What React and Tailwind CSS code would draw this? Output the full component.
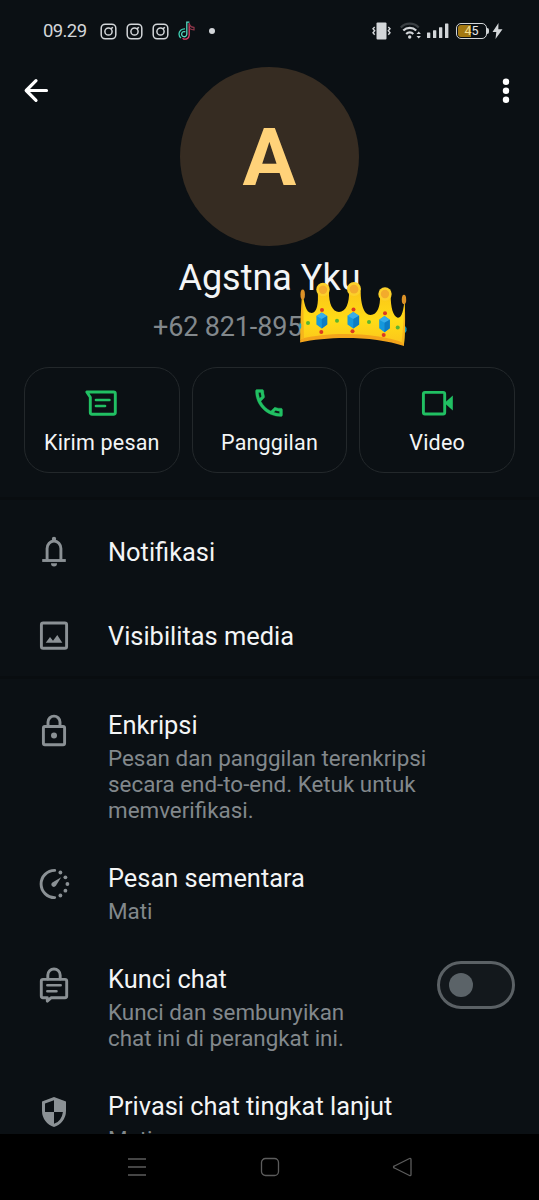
import React, { useState } from "react";

const InstagramIcon = () => (
  <svg width="17" height="17" viewBox="0 0 17 17" fill="none" stroke="#d3d6d9" strokeWidth="1.5">
    <rect x="1.2" y="1.2" width="14.6" height="14.6" rx="4" />
    <circle cx="8.5" cy="8.5" r="3.6" />
    <path d="M11 5.900 12.800 4.200" />
  </svg>
);

const TiktokIcon = () => (
  <svg width="17" height="20" viewBox="0 0 17 20" fill="none" strokeWidth="1.3">
    <path d="M10.2 1v12a4 4 0 0 1-6.6 3" stroke="#e0436a" transform="translate(1 1.2)" />
    <path d="M11.5 3.5c.6 1.800 2 2.800 4.500 3v2.300c-1.500 0-3-.4-4.300-1.300" stroke="#8c3548" />
    <path d="M7 7.800C3.600 7.600 1 9.900 1 13c0 1.700.8 3.200 2 4.100" stroke="#3fd0b4" />
    <path d="M7.300 10.800a2.600 2.600 0 1 0 1.500 2.500V1.200h2.600" stroke="#54d8bf" />
  </svg>
);

const StatusRight = () => (
  <div className="flex items-center">
    <svg width="19" height="18" viewBox="0 0 19 18" fill="#d3d6d9">
      <rect x="4.500" y="0.500" width="10" height="17" rx="1" />
      <path
        d="M2.700 5 1 6.800l1.700 2L1 10.800l1.700 2M16.300 5 18 6.800l-1.700 2 1.700 2-1.700 2"
        fill="none"
        stroke="#d3d6d9"
        strokeWidth="1.400"
      />
    </svg>
    <svg className="ml-[9px]" width="22" height="18" viewBox="0 0 22 18" fill="none" strokeWidth="2.200">
      <path d="M.8 5.400a12.500 12.500 0 0 1 17.900 0" stroke="#3a3f43" />
      <path d="M3.300 8.600a9 9 0 0 1 12.900 0" stroke="#d3d6d9" />
      <path d="M6.200 11.900a5 5 0 0 1 7.100 0" stroke="#d3d6d9" />
      <circle cx="9.700" cy="15" r="1.700" fill="#d3d6d9" />
      <path d="m16.500 12 2.200-2.600 2.200 2.600zM16.500 14l2.200 2.600 2.200-2.600z" fill="#d3d6d9" />
    </svg>
    <svg className="ml-[5px]" width="22" height="16" viewBox="0 0 22 16" fill="#d3d6d9">
      <rect x="0" y="9.500" width="3.300" height="5.500" rx="0.500" />
      <rect x="6" y="7.300" width="3.300" height="7.700" rx="0.500" />
      <rect x="12" y="4.300" width="3.300" height="10.700" rx="0.500" />
      <rect x="18" y="0.500" width="3.400" height="14.500" rx="0.500" />
    </svg>
    <div className="ml-[7px] flex h-4 w-[31px] items-center rounded-[5px] border-[1.500px] border-[#d3d6d9] p-px">
      <div className="flex h-full w-full items-center justify-center rounded-[3px] bg-linear-to-r from-[#a37812] from-47% to-transparent to-47% text-[12.5px] leading-none text-[#e8e8e8]">
        <span className="text-[#f5df8e]">4</span>5
      </div>
    </div>
    <div className="h-[6px] w-[2px] rounded-r bg-[#d3d6d9]" />
    <svg className="ml-[3px]" width="11" height="16" viewBox="0 0 11 16" fill="#d3d6d9">
      <path d="M6.500 0 .500 9h3.800L3.500 16 10.500 6.300H6.300z" />
    </svg>
  </div>
);

const Crown = () => (
  <svg width="108" height="66" viewBox="0 0 108 66">
    <defs>
      <linearGradient id="gold" x1="0" y1="0" x2="0" y2="1">
        <stop offset="0" stopColor="#fbc618" />
        <stop offset="0.550" stopColor="#ffdc16" />
        <stop offset="1" stopColor="#fbc51c" />
      </linearGradient>
    </defs>
    <path
      d="M3.500 10C5 20 6.500 31 12.700 31c5.300 0 7-10 6-21h11.300c-.3 11 3.500 20 10 20 7 0 10.500-9.500 10-20.500h11.700c0 12 3 23.500 9.800 23.500 7 0 10-9 9.500-19.500h10.700c0 12 2.300 20.500 7 22.200C103 36.500 104.500 27 105.500 19c1 8 .8 34-.5 43.500C78 52 31 51 1.300 58z"
      fill="url(#gold)"
    />
    <path d="M1.300 57C31 49.500 78 50.500 105 61v3C78 54.500 31 53.500 1 60.500z" fill="#f3a41b" />
    <path d="M3 12c-1 15-2 30-1.500 45l3.500-.8C4.500 40 5 27 3 12zM105.500 20c1 14 .5 29-.5 42l-2.500-.8c1.500-14 2.500-27 3-41.200z" fill="#f5b51c" />
    <ellipse cx="3.700" cy="12.500" rx="2.200" ry="5" fill="#dc9127" />
    <ellipse cx="105" cy="17.500" rx="2.200" ry="4.800" fill="#dc9127" />
    <circle cx="24" cy="7.500" r="6.700" fill="#fcd02a" />
    <circle cx="24" cy="7.800" r="4.200" fill="#f3ab2c" />
    <circle cx="55" cy="7" r="7" fill="#fcd02a" />
    <circle cx="55" cy="7.200" r="4.400" fill="#f3ab2c" />
    <circle cx="86" cy="12" r="6.700" fill="#fcd02a" />
    <circle cx="86" cy="12" r="4.200" fill="#f3ab2c" />
    <g>
      <path d="m22.800 30.500 5.400 3.500v8.500l-5.400 4-5.400-4V34z" fill="#1598dc" />
      <path d="m22.800 30.500 5.400 3.500-5.400 3-5.400-3z" fill="#38ade9" />
      <path d="m22.800 37 5.400-3v8.500l-5.400 4z" fill="#0c7cc4" />
      <path d="m54.300 30 5.800 3.700v8.800l-5.800 4-5.800-4v-8.800z" fill="#1598dc" />
      <path d="m54.300 30 5.800 3.700-5.800 3.300-5.800-3.300z" fill="#38ade9" />
      <path d="m54.300 37 5.800-3.300v8.800l-5.800 4z" fill="#0c7cc4" />
      <path d="m85.500 34 5.300 3.700v8.500l-5.300 4-5.300-4v-8.500z" fill="#1598dc" />
      <path d="m85.500 34 5.300 3.700-5.300 3-5.300-3z" fill="#38ade9" />
      <path d="m85.500 40.700 5.300-3v8.500l-5.300 4z" fill="#0c7cc4" />
      <path d="M.5 40.500 2.200 42v3.500L.5 48zM106.200 44l1.300 2v3l-1.500 2z" fill="#19a4c9" />
    </g>
    <g fill="#dd3a20">
      <circle cx="23" cy="28" r="2" />
      <circle cx="22.300" cy="50" r="2" />
      <circle cx="54.500" cy="27.500" r="2" />
      <circle cx="53.500" cy="49.300" r="2" />
      <circle cx="86" cy="31.300" r="2" />
      <circle cx="84.700" cy="53" r="2" />
    </g>
    <g fill="#5cb531">
      <circle cx="9" cy="41" r="2" />
      <circle cx="38" cy="38.700" r="2" />
      <circle cx="70" cy="40" r="2" />
      <circle cx="98.700" cy="45.500" r="2" />
    </g>
  </svg>
);

const Icon = ({ children }) => (
  <svg
    className="shrink-0"
    width="36"
    height="36"
    viewBox="0 0 36 36"
    fill="none"
    stroke="currentColor"
    strokeWidth="2.900"
    strokeLinecap="round"
    strokeLinejoin="round"
  >
    {children}
  </svg>
);

const BellIcon = () => (
  <Icon>
    <path d="M11.100 26V14.500a6.900 7.500 0 0 1 13.800 0V26" />
    <path d="M6.200 26.500h23.600" strokeLinecap="butt" strokeWidth="2.900" />
    <circle cx="18" cy="4.900" r="2.200" fill="currentColor" stroke="none" />
    <path d="M15 29.200h6a3 3.200 0 0 1-6 0z" fill="currentColor" stroke="none" />
  </Icon>
);

const MediaIcon = () => (
  <Icon>
    <rect x="5.400" y="5" width="25.200" height="25.200" rx="1.800" />
    <path d="M9.700 24.700 14 18.900l3 3.900 4.300-5.800 5 7.700z" fill="currentColor" stroke="none" />
  </Icon>
);

const LockIcon = () => (
  <Icon>
    <rect x="7.400" y="13.500" width="21.200" height="18.200" rx="1.500" />
    <path d="M12 13V9.100a6 6 0 0 1 12 0V13" />
    <circle cx="18" cy="22.500" r="3" fill="currentColor" stroke="none" />
  </Icon>
);

const TimerIcon = () => (
  <Icon>
    <path d="M18.700 4.400a13.600 13.600 0 1 0 0 27.200" />
    <path d="M16.200 20.200c-1.400-1.300-1-2.600.2-3.700l8.800-5.300-5.300 8.600c-1 1.400-2.500 1.500-3.700.4z" fill="currentColor" stroke="none" />
    <g fill="currentColor" stroke="none">
      <circle cx="24.400" cy="6.500" r="1.900" />
      <circle cx="29.400" cy="11.300" r="1.900" />
      <circle cx="31.400" cy="18" r="1.900" />
      <circle cx="29.400" cy="24.700" r="1.900" />
      <circle cx="24.400" cy="29.500" r="1.900" />
    </g>
  </Icon>
);

const ChatLockIcon = () => (
  <Icon>
    <path d="M7 12.400h22a1.700 1.700 0 0 1 1.700 1.700v15a1.700 1.700 0 0 1-1.700 1.700H15l-3.700 3.300v-3.300H7a1.700 1.700 0 0 1-1.700-1.700v-15A1.700 1.700 0 0 1 7 12.400z" />
    <path d="M11.800 12V8.200a6.200 6.200 0 0 1 12.400 0V12" />
    <path d="M11.300 18.300h13.400M11.300 24.300h9.200" strokeWidth="2.500" />
  </Icon>
);

const ShieldIcon = () => (
  <svg className="shrink-0" width="36" height="36" viewBox="0 0 24 24" fill="currentColor">
    <path d="M12 22q-3.475-.875-5.737-3.988T4 11.100V5l8-3 8 3v6.100q0 3.800-2.263 6.913T12 22zm0-2.100q2.425-.75 4.050-2.963T17.950 12H12V4.125l-6 2.250v5.175q0 .175.050.450H12z" />
  </svg>
);

const MessageIcon = () => (
  <Icon>
    <path d="M2.800 7H29.600a1.700 1.700 0 0 1 1.700 1.700v18.900a1.700 1.700 0 0 1-1.700 1.700H8a1.700 1.700 0 0 1-1.700-1.700V12.200z" />
    <path d="M12 15h13.400M12 21h9" strokeWidth="2.700" />
  </Icon>
);

const PhoneIcon = () => (
  <svg width="36" height="36" viewBox="0 0 24 24" fill="currentColor" stroke="currentColor" strokeWidth="0.200">
    <path d="M6.540 5c.060.890.210 1.760.450 2.590l-1.200 1.200c-.410-1.200-.670-2.470-.760-3.790h1.510m9.860 12.020c.850.240 1.720.390 2.600.450v1.490c-1.320-.090-2.590-.350-3.800-.750l1.200-1.190M7.500 3H4c-.55 0-1 .45-1 1 0 9.390 7.610 17 17 17 .55 0 1-.45 1-1v-3.490c0-.55-.45-1-1-1-1.240 0-2.450-.2-3.570-.570-.1-.040-.210-.050-.310-.050-.260 0-.510.1-.710.290l-2.200 2.200c-2.830-1.450-5.150-3.760-6.590-6.590l2.200-2.200c.280-.280.360-.670.250-1.020C8.700 6.450 8.500 5.250 8.500 4c0-.55-.45-1-1-1z" />
  </svg>
);

const VideoIcon = () => (
  <Icon>
    <rect x="4.400" y="7.400" width="21.300" height="21.600" rx="1.500" />
    <path d="m25.500 18 8.300-7.500v15z" fill="currentColor" stroke="none" />
  </Icon>
);

const actions = [
  { label: "Kirim pesan", icon: <MessageIcon /> },
  { label: "Panggilan", icon: <PhoneIcon /> },
  { label: "Video", icon: <VideoIcon /> },
];

const Row = ({ icon, title, lines = [], children, className }) => (
  <div className={`flex items-start px-9 ${className}`}>
    <div className="text-[#8b9195]">{icon}</div>
    <div className="ml-9 flex-1 whitespace-nowrap">
      <h2 className="mb-[1.5px] text-[25.4px] leading-9 text-[#f3f5f6]">{title}</h2>
      {lines.map((line) => (
        <p key={line} className="text-[22.4px] leading-[26.2px] text-[#82888c]">
          {line}
        </p>
      ))}
    </div>
    {children}
  </div>
);

const App = () => {
  const [locked, setLocked] = useState(false);

  return (
    <div className="flex h-[1200px] w-[539px] flex-col overflow-hidden bg-[#0b1014] font-[Roboto,sans-serif]">
      {/* status bar */}
      <div className="flex h-[62px] shrink-0 items-center justify-between pr-9 pl-[43px]">
        <div className="flex items-center">
          <span className="w-[44px] pt-0.5 text-[18.5px] tracking-[-0.6px] text-[#d3d6d9]">09.29</span>
          <div className="ml-[13px] flex items-center gap-[9px]">
            <InstagramIcon />
            <InstagramIcon />
            <InstagramIcon />
            <TiktokIcon />
          </div>
          <div className="ml-[14px] h-1.5 w-1.5 rounded-full bg-[#d3d6d9]" />
        </div>
        <StatusRight />
      </div>

      {/* header */}
      <div className="flex h-[184px] shrink-0 items-start justify-between px-[18px]">
        <button className="mt-[11px] text-white">
          <svg width="36" height="36" viewBox="0 0 36 36" fill="none" stroke="currentColor" strokeWidth="3.200" strokeLinecap="round" strokeLinejoin="round">
            <path d="M28.500 17.500H8.500M18 7.700 8.200 17.500 18 27.300" />
          </svg>
        </button>
        <div className="mt-[4.5px] mr-[3.5px] flex h-[179.5px] w-[179.5px] items-center justify-center rounded-full bg-[#362c22] pt-[3px] text-[80px] font-bold text-[#ffd279]">
          A
        </div>
        <button className="mt-[11px] -mr-[3px] text-white">
          <svg width="36" height="36" viewBox="0 0 36 36" fill="currentColor">
            <circle cx="18" cy="8.800" r="3.200" />
            <circle cx="18" cy="17.800" r="3.200" />
            <circle cx="18" cy="26.800" r="3.200" />
          </svg>
        </button>
      </div>

      <div className="relative h-[121px] shrink-0 whitespace-nowrap">
        <h1 className="pt-2.5 text-center text-[36px] leading-[44px] text-[#f3f5f6]">Agstna Yku</h1>
        <p className="mt-[11px] pl-[153px] text-[27px] leading-8 tracking-[-0.15px] text-[#82888c]">+62 821-895</p>
        <div className="absolute top-[36px] left-[299px]">
          <Crown />
        </div>
      </div>

      <div className="grid h-[106px] shrink-0 grid-cols-3 gap-3 px-6">
        {actions.map((item) => (
          <button
            key={item.label}
            className="flex flex-col items-center rounded-[25px] border-[1.500px] border-[#23282b] pt-[17px] text-[#21c063]"
          >
            {item.icon}
            <span className="mt-2 text-[21.5px] leading-7 tracking-[0.2px] whitespace-nowrap text-[#f3f5f6]">
              {item.label}
            </span>
          </button>
        ))}
      </div>

      {/* settings */}
      <div className="mt-6 h-[3px] shrink-0 bg-[#090d10]" />
      <div className="min-h-0 flex-1 overflow-hidden">
        <Row className="h-[84px] pt-[34px]" icon={<BellIcon />} title="Notifikasi" />
        <Row className="h-[92px] pt-[34px]" icon={<MediaIcon />} title="Visibilitas media" />
        <div className="h-[3px] bg-[#090d10]" />
        <Row
          className="h-[154px] pt-[28px]"
          icon={<div className="mt-[6px]"><LockIcon /></div>}
          title="Enkripsi"
          lines={["Pesan dan panggilan terenkripsi", "secara end-to-end. Ketuk untuk", "memverifikasi."]}
        />
        <Row
          className="h-[101px] pt-[27px]"
          icon={<div className="mt-[6px]"><TimerIcon /></div>}
          title="Pesan sementara"
          lines={["Mati"]}
        />
        <Row
          className="h-[127px] pt-[27px] pr-6"
          icon={<div className="mt-[6px]"><ChatLockIcon /></div>}
          title="Kunci chat"
          lines={["Kunci dan sembunyikan", "chat ini di perangkat ini."]}
        >
          <button
            onClick={() => setLocked(!locked)}
            className={`flex h-12 w-[78px] items-center rounded-full border-3 border-[#5b6165] bg-[#13181c] px-[9px] ${
              locked ? "justify-end" : ""
            }`}
          >
            <span className="h-6 w-6 rounded-full bg-[#5b6368]" />
          </button>
        </Row>
        <Row
          className="pt-[27px]"
          icon={<div className="mt-[6px]"><ShieldIcon /></div>}
          title="Privasi chat tingkat lanjut"
          lines={["Mati"]}
        />
      </div>

      {/* navigation bar */}
      <div className="flex h-[66px] shrink-0 items-center justify-between bg-black px-[127px] text-[#5c5c5c]">
        <svg width="20" height="20" viewBox="0 0 20 20" stroke="currentColor" strokeWidth="1.500">
          <path d="M1 2h18M1 10h18M1 18h18" />
        </svg>
        <svg width="20" height="20" viewBox="0 0 20 20" fill="none" stroke="currentColor" strokeWidth="1.300">
          <rect x="1.500" y="1.500" width="17" height="17" rx="4" />
        </svg>
        <svg width="20" height="20" viewBox="0 0 20 20" fill="none" stroke="currentColor" strokeWidth="1.300" strokeLinejoin="round">
          <path d="M17.500 1.500a1 1 0 0 1 1.500 1v15a1 1 0 0 1-1.500 1L2.500 11a1 1 0 0 1 0-2z" />
        </svg>
      </div>
    </div>
  );
};

export default App;
